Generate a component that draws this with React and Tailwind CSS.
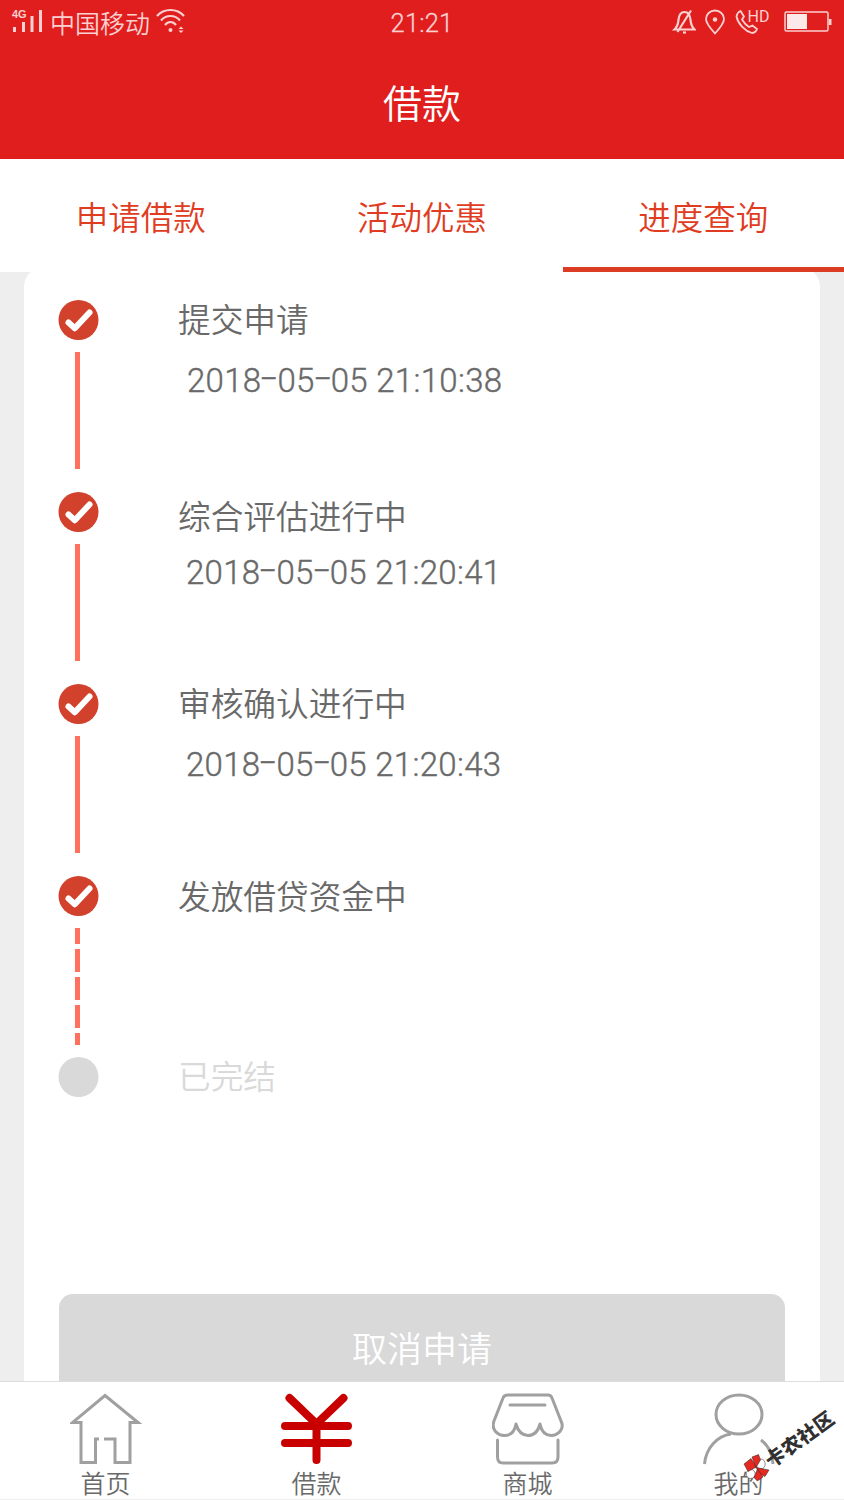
import React from 'react';

const tabs = [
  { label: '申请借款', active: false },
  { label: '活动优惠', active: false },
  { label: '进度查询', active: true },
];

// gap: the spacing of the two text lines differs a little from step to step
const steps = [
  { title: '提交申请', time: '2018-05-05 21:10:38', line: 'solid', box: 'h-[192px]', pad: '-mt-[2px]', gap: 'mt-[23px] ml-[9px]' },
  { title: '综合评估进行中', time: '2018-05-05 21:20:41', line: 'solid', box: 'h-[192px]', pad: 'pt-[3px]', gap: 'mt-[18px] ml-[8px]' },
  { title: '审核确认进行中', time: '2018-05-05 21:20:43', line: 'solid', box: 'h-[192px]', pad: '-mt-[2px]', gap: 'mt-[23px] ml-[8px]' },
  { title: '发放借贷资金中', line: 'dashed', box: 'h-[181px]', pad: '-mt-px', gap: '' },
  { title: '已完结', pending: true, box: 'h-[40px]', pad: '-mt-[2px]', gap: '' },
];

const StatusBar = () => (
  <div className="flex h-[45px] items-center justify-between pr-3 pl-3 text-[#fbd0d0]">
    <div className="flex w-[300px] items-center">
      <svg className="-mt-[3px] overflow-visible" width="32" height="26" viewBox="0 0 32 26" fill="currentColor">
        <text x="0" y="10" fontSize="11" fontWeight="bold" fontFamily="Liberation Sans, sans-serif">4G</text>
        <rect x="1" y="19" width="3" height="5" />
        <rect x="10" y="14" width="3" height="10" />
        <rect x="18.500" y="8" width="3" height="16" />
        <rect x="27" y="2" width="3" height="22" />
      </svg>
      <span className="-mt-[2px] ml-[6px] text-[25px] leading-[36px] font-[350]">中国移动</span>
      <svg className="-mt-[3px] ml-[6px]" width="30" height="26" viewBox="0 0 30 26" fill="none" stroke="currentColor" strokeWidth="2.200">
        <path d="M1 8C8 0 21 0 28 8M5 12.500C10 6.500 19 6.500 24 12.500M9 17C12 13 17 13 20 17" />
        <circle cx="14.500" cy="22" r="2" fill="currentColor" stroke="none" />
        <path d="M22.500 21l2.500-2.500 2.500 2.500zM22.500 22.500l2.500 2.500 2.500-2.500z" fill="currentColor" stroke="none" />
      </svg>
    </div>
    <span className="font-['Roboto',sans-serif] text-[25.500px] leading-[30px] font-light tracking-[0.2px] [-webkit-text-stroke:0.3px]">21:21</span>
    <div className="-mt-[2px] flex w-[300px] items-center justify-end">
      <svg width="24" height="26" viewBox="0 0 24 26" fill="none" stroke="currentColor" strokeWidth="2.200">
        <path d="M2.500 20.500C5.500 18 6 15 6.500 11C7 5.500 9 3 12.500 3S18 5.500 18.500 11C19 15 19.500 18 22.500 20.500zM19 1.500L5.500 23" />
        <path d="M11 23.500h3" />
      </svg>
      <svg className="ml-[8px]" width="22" height="26" viewBox="0 0 22 26" fill="none" stroke="currentColor" strokeWidth="1.800">
        <path d="M11 24.500C6 19 2 14 2 10a9 8.500 0 0 1 18 0c0 4-4 9-9 14.500z" />
        <circle cx="11" cy="10.500" r="2.300" fill="currentColor" stroke="none" />
      </svg>
      <svg className="ml-[9px] overflow-visible" width="34" height="26" viewBox="0 0 34 26" fill="none" stroke="currentColor" strokeWidth="1.800">
        <path d="M5.500 2L9 7.500L7 10.500Q10 15.500 14 18L17.500 16.500L22 20Q21 23.500 17 24C10 22 3 15 1.500 7.500Q2 3.500 5.500 2z" />
        <text x="12.500" y="13" fontSize="16" fill="currentColor" stroke="none" fontFamily="Roboto, sans-serif">HD</text>
      </svg>
      <svg className="ml-[15px]" width="48" height="22" viewBox="0 0 48 22" fill="none" stroke="currentColor" strokeWidth="1.500">
        <rect x="1" y="1" width="43" height="19" rx="1.500" />
        <rect x="3" y="3" width="20" height="15" fill="#fce9e9" stroke="none" />
        <rect x="45" y="8" width="2.500" height="6" fill="currentColor" stroke="none" />
      </svg>
    </div>
  </div>
);

const Time = ({ value }) => (
  <span className="block whitespace-pre font-['Roboto',sans-serif] text-[33px] leading-[40px] font-light tracking-[0.300px] [-webkit-text-stroke:0.4px]">
    {value.split('').map((char, i) =>
      char === '-' ? (
        <span key={i} className="inline-block w-[16px] origin-center -translate-y-[3px] scale-x-[1.700] text-center">-</span>
      ) : (
        char
      )
    )}
  </span>
);

const StepMark = ({ step }) => (
  <div className="flex w-[40px] flex-col items-center">
    <svg className="overflow-visible" width="40" height="40" viewBox="0 0 40 40">
      <circle cx="19.500" cy="20" r="20" fill={step.pending ? '#d9d9d9' : '#d2412c'} />
      {!step.pending && (
        <path d="M9.500 22.500L15.800 28.300L30.500 12.500" fill="none" stroke="#fff" strokeWidth="6" strokeLinecap="round" strokeLinejoin="round" />
      )}
    </svg>
    {step.line === 'solid' && <div className="mt-[12px] mr-[3px] h-[117px] w-[5px] bg-[#ff705e]" />}
    {step.line === 'dashed' && (
      <div className="mt-[12px] mr-[3px] flex w-[5px] flex-col gap-[5px]">
        <div className="h-[16px] bg-[#ff705e]" />
        <div className="h-[23px] bg-[#ff705e]" />
        <div className="h-[23px] bg-[#ff705e]" />
        <div className="h-[23px] bg-[#ff705e]" />
        <div className="h-[12px] bg-[#ff705e]" />
      </div>
    )}
  </div>
);

const HomeIcon = () => (
  <svg width="72" height="72" viewBox="0 0 72 72" fill="none" stroke="#a0a0a0" strokeWidth="3">
    <path d="M29 46H25.500V69.500H11V29.500H2.500L35 2.500L68 29.500H60V69.500H45V46H34" />
  </svg>
);

const YuanIcon = () => (
  <svg width="72" height="72" viewBox="0 0 72 72" fill="none" stroke="#c80000" strokeWidth="8" strokeLinecap="round">
    <path d="M8.500 5L35.500 31L62.500 5M4 33H67M4 50H67M35.500 31V67" />
  </svg>
);

const ShopIcon = () => (
  <svg width="72" height="72" viewBox="0 0 72 72" fill="none" stroke="#a0a0a0" strokeWidth="3" strokeLinecap="round" strokeLinejoin="round">
    <path d="M16 2H56Q59 2 60 5L69 28C73 36 66 42.500 59 42.500Q50 42 48 31Q45 42.500 36 42.500Q27 42 24 31Q22 42.500 12.500 42.500C5 42.500 -1 36 2 28L11 5Q12 2 16 2z" />
    <path d="M18 12H53M5.500 47V64Q5.500 70 11 70H60Q66 70 66 64V47" />
  </svg>
);

const UserIcon = () => (
  <svg width="72" height="72" viewBox="0 0 72 72" fill="none" stroke="#a0a0a0" strokeWidth="3">
    <ellipse cx="36" cy="21.500" rx="23" ry="19.500" />
    <path d="M1.500 71C3 55 14 43 28 41M58 47Q69 55 70 71" />
  </svg>
);

const nav = [
  { label: '首页', Icon: HomeIcon },
  { label: '借款', Icon: YuanIcon },
  { label: '商城', Icon: ShopIcon },
  { label: '我的', Icon: UserIcon },
];

const Watermark = () => (
  <div className="absolute right-0 bottom-[10px] h-[86px] w-[109px]">
    <svg className="overflow-visible" width="109" height="86" viewBox="0 0 109 86">
      <g stroke="#222" strokeWidth="0.500">
        <ellipse cx="25.700" cy="60" rx="4.500" ry="5" fill="#fff" />
        <ellipse cx="15.700" cy="70" rx="4.500" ry="4.500" fill="#fff" />
        <path d="M9 60L16 54.500L21.500 63L13 67.500z" fill="#e52820" />
        <path d="M17 53L23.500 50.500L25.500 56L21 63.500z" fill="#e52820" />
        <path d="M21 63.500L34 66L30 72.500L25 70z" fill="#e52820" />
        <path d="M19 73.500L22.500 65L28 73L22.300 77z" fill="#e52820" />
      </g>
      <text transform="translate(36.500 64.500) rotate(-36)" fontSize="19.500" fontWeight="900" fill="#303030" fontFamily="Noto Sans CJK SC, sans-serif" letterSpacing="0.500">卡农社区</text>
    </svg>
  </div>
);

const App = () => {
  return (
    <div className="relative flex h-[1500px] w-[844px] flex-col overflow-hidden bg-[#eee] font-['Noto_Sans_CJK_SC',sans-serif] text-[#696969]">
      <header className="h-[159px] bg-[#e01e1e]">
        <StatusBar />
        <h1 className="mt-[27px] text-center text-[39px] leading-[58px] font-[350] text-white">借款</h1>
      </header>

      <div className="grid h-[113px] grid-cols-3 bg-white">
        {tabs.map((tab) => (
          <div
            key={tab.label}
            className={`border-b-[5px] pt-[33px] text-center text-[32.500px] leading-[48px] font-[350] text-[#e03c22] ${tab.active ? 'border-[#dd3c24]' : 'border-transparent'}`}
          >
            {tab.label}
          </div>
        ))}
      </div>

      <main className="flex flex-1 flex-col overflow-hidden">
        <div className="mr-[24px] ml-[23.500px] -mt-[5px] flex flex-1 flex-col rounded-t-[20px] bg-white pt-[33px] pr-[35px] pl-[35.500px]">
          {steps.map((step) => (
            <div key={step.title} className={`flex shrink-0 ${step.box}`}>
              <StepMark step={step} />
              <div className={`ml-[79px] ${step.pad} ${step.pending ? 'text-[#d9d9d9]' : ''}`}>
                <div className="text-[32.700px] leading-[40px] font-[350]">{step.title}</div>
                {step.time && (
                  <div className={step.gap}>
                    <Time value={step.time} />
                  </div>
                )}
              </div>
            </div>
          ))}
          <button className="mt-auto h-[87px] rounded-t-[14px] bg-[#d9d9d9] pt-[20px] text-[35px] font-[350] text-white">取消申请</button>
        </div>
      </main>

      <nav className="grid h-[119px] grid-cols-4 border-t border-[#ddd] bg-white">
        {nav.map(({ label, Icon }) => (
          <div key={label} className="flex flex-col items-center border-b-2 border-[#eee] pt-[11px]">
            <Icon />
            <span className="text-[25px] leading-[34px] font-[350]">{label}</span>
          </div>
        ))}
      </nav>
      <Watermark />
    </div>
  );
};

export default App;
